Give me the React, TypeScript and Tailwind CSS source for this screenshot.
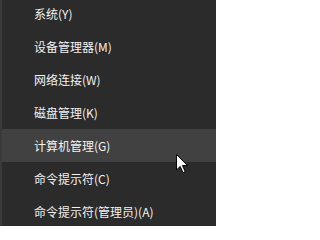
const items = [
  "系统(Y)",
  "设备管理器(M)",
  "网络连接(W)",
  "磁盘管理(K)",
  "计算机管理(G)",
  "命令提示符(C)",
  "命令提示符(管理员)(A)",
];

const ArrowCursor = () => (
  <svg
    width="13"
    height="20"
    viewBox="0 0 13 20"
    className="absolute left-[174px] top-[154px]"
  >
    <path
      d="M0.5 0.5 L0.5 16 L4.2 12.4 L7 18.6 L9.2 17.6 L6.5 11.6 L11.5 11.6 Z"
      fill="#ffffff"
      stroke="#000000"
      strokeWidth="1"
      strokeLinejoin="round"
    />
  </svg>
);

export default function App() {
  const hovered = 4;

  return (
    <div
      className="relative h-[226px] w-[216px] overflow-hidden border-l-2 border-[#3a3a3a] bg-[#2b2b2b]"
      style={{ fontFamily: '"Noto Sans CJK SC", "Noto Sans", sans-serif' }}
    >
      <ul className="-mt-[3px] flex flex-col">
        {items.map((label, i) => (
          <li
            key={label}
            className={
              i === hovered
                ? "flex h-[33px] items-center bg-[#414141] pl-[32px] text-[12px] text-[#f2f2f2]"
                : "flex h-[33px] items-center pl-[32px] text-[12px] text-[#f2f2f2]"
            }
          >
            {label}
          </li>
        ))}
      </ul>
      <ArrowCursor />
    </div>
  );
}
